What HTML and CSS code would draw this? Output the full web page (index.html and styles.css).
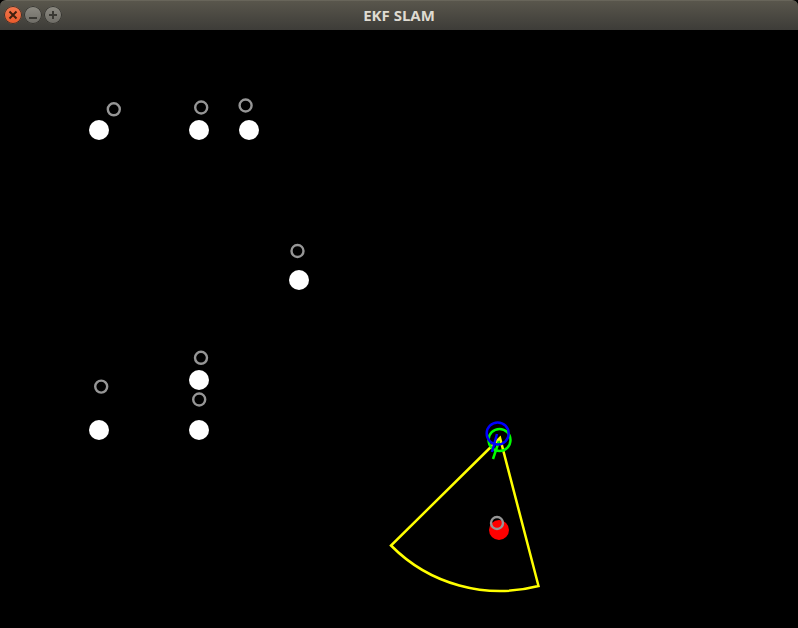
FILE: index.html
```html
<!DOCTYPE html>
<html lang="en">
<head>
<meta charset="utf-8">
<title>EKF SLAM</title>
<link rel="stylesheet" href="styles.css">
</head>
<body>
<div class="window">
  <header class="titlebar">
    <div class="controls">
      <button class="control close" type="button" aria-label="Close"><svg viewBox="0 0 18 18"><path d="M5.500 5.500l7 7M12.500 5.500l-7 7"/></svg></button>
      <button class="control" type="button" aria-label="Minimize"><svg viewBox="0 0 18 18"><path d="M5 12h8"/></svg></button>
      <button class="control" type="button" aria-label="Maximize"><svg viewBox="0 0 18 18"><path d="M5 9h8M9 5v8"/></svg></button>
    </div>
    <h1 class="title">EKF SLAM</h1>
  </header>
  <main class="scene">
    <svg class="map" viewBox="0 0 798 598" preserveAspectRatio="xMinYMin meet" aria-label="Landmark map">
      <g class="landmark">
        <circle cx="99" cy="100" r="10"/>
        <circle cx="199" cy="100" r="10"/>
        <circle cx="249" cy="100" r="10"/>
        <circle cx="299" cy="250" r="10"/>
        <circle cx="199" cy="350" r="10"/>
        <circle cx="99" cy="400" r="10"/>
        <circle cx="199" cy="400" r="10"/>
        <circle class="seen" cx="499" cy="500" r="10"/>
      </g>
      <g class="estimate">
        <circle cx="113.800" cy="79.300" r="6"/>
        <circle cx="201.200" cy="77.500" r="6"/>
        <circle cx="245.600" cy="75.500" r="6"/>
        <circle cx="297.500" cy="221" r="6"/>
        <circle cx="201" cy="327.800" r="6"/>
        <circle cx="101.200" cy="356.600" r="6"/>
        <circle cx="199.200" cy="369.500" r="6"/>
        <circle cx="497" cy="493" r="6"/>
      </g>
      <path class="view" d="M500 408L391 515.500A153 153 0 0 0 538.500 556Z"/>
      <g class="pose actual"><circle cx="499.500" cy="410" r="11"/><path d="M499 411L493 429"/></g>
      <g class="pose believed"><circle cx="497.700" cy="403.500" r="11"/><path d="M497 404L492 422"/></g>
    </svg>
  </main>
</div>
</body>
</html>
```
FILE: styles.css
```css
* { box-sizing: border-box; }
body { margin: 0; background: #000; }
.window { display: flex; flex-direction: column; min-height: 100vh; }
.titlebar {
  display: grid;
  grid-template-columns: 1fr auto 1fr;
  align-items: center;
  height: 30px;
  padding: 0 4px 1px;
  border-top: 1px solid #68655a;
  border-radius: 6px 6px 0 0;
  background: linear-gradient(#59564c, #3d3c38);
}
.controls { display: flex; gap: 2px; }
.control {
  width: 18px;
  height: 18px;
  padding: 0;
  border: 0;
  border-radius: 50%;
  background: linear-gradient(#8d8b83, #6d6b65);
  box-shadow: inset 0 0 0 1px #35342f;
}
.close { background: linear-gradient(#f5794f, #e8592a); }
.control svg { display: block; width: 18px; height: 18px; fill: none; stroke: #3a3934; stroke-width: 2; }
.close svg { stroke: #40200f; }
.title {
  margin: 0;
  color: #dfdbd2;
  font: bold 15px/20px "Open Sans", "Noto Sans", sans-serif;
}
.scene { flex: 1; background: #000; }
.map { display: block; width: 100%; }
.landmark { fill: #fff; }
.seen { fill: #f00; }
.estimate { fill: none; stroke: #969696; stroke-width: 2.4; }
.view { fill: none; stroke: #ff0; stroke-width: 2.5; }
.pose { fill: none; stroke-width: 2.5; }
.actual { stroke: #0f0; }
.believed { stroke: #00f; }
```
